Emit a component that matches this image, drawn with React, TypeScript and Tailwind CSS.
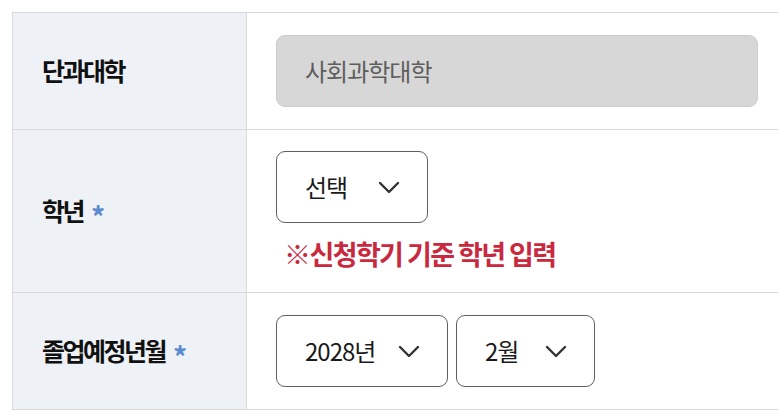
import { ReactNode } from "react";

const font = { fontFamily: '"Noto Sans CJK KR", "Noto Sans", sans-serif' };

function Chevron() {
  return (
    <svg width="22" height="13" viewBox="0 0 22 13" fill="none" className="shrink-0">
      <path d="M2 2l9 9 9-9" stroke="#333" strokeWidth="2.4" strokeLinecap="round" strokeLinejoin="round" />
    </svg>
  );
}

function SelectBox({ label, width }: { readonly label: string; readonly width: string }) {
  return (
    <div
      className={`flex items-center justify-between h-[72px] ${width} pl-[28px] pr-[27px] border border-[#5f5f5f] rounded-[9px] bg-white`}
    >
      <span className="text-[24px] tracking-[-1px] text-[#1a1a1a]">{label}</span>
      <Chevron />
    </div>
  );
}

function Row({ label, required, children, py }: { readonly label: string; readonly required?: boolean; readonly children: ReactNode; readonly py: string }) {
  return (
    <div className="flex border-b border-[#d9d9d9]">
      <div className="w-[234px] shrink-0 flex items-center pl-[29px] bg-[#eef1f6] border-r border-[#d9d9d9]">
        <span className="text-[25px] font-bold tracking-[-2.5px] text-[#111]">{label}</span>
        {required && <span className="ml-[8px] text-[28px] leading-none font-bold text-[#5a8ad0] mt-[10px]">*</span>}
      </div>
      <div className={`flex-1 pl-[29px] pr-[20px] ${py}`}>{children}</div>
    </div>
  );
}

export default function App() {
  return (
    <div className="w-[778px] h-[412px] bg-white pt-[12px] pl-[12px]" style={font}>
      <div className="border-t border-l border-[#d9d9d9]">
        <Row label="단과대학" py="py-[22px]">
          <div className="h-[72px] flex items-center pl-[28px] bg-[#d7d7d7] border border-[#cccccc] rounded-[9px]">
            <span className="text-[24px] tracking-[-1px] text-[#5e5e5e]">사회과학대학</span>
          </div>
        </Row>
        <Row label="학년" required py="pt-[21px] pb-[20px]">
          <SelectBox label="선택" width="w-[152px]" />
          <p className="mt-[13px] pl-[8px] text-[27px] font-bold tracking-[-1.6px] text-[#c9283e] leading-[36px]">
            ※신청학기 기준 학년 입력
          </p>
        </Row>
        <Row label="졸업예정년월" required py="py-[22px]">
          <div className="flex gap-[8px]">
            <SelectBox label="2028년" width="w-[172px]" />
            <SelectBox label="2월" width="w-[139px]" />
          </div>
        </Row>
      </div>
    </div>
  );
}
